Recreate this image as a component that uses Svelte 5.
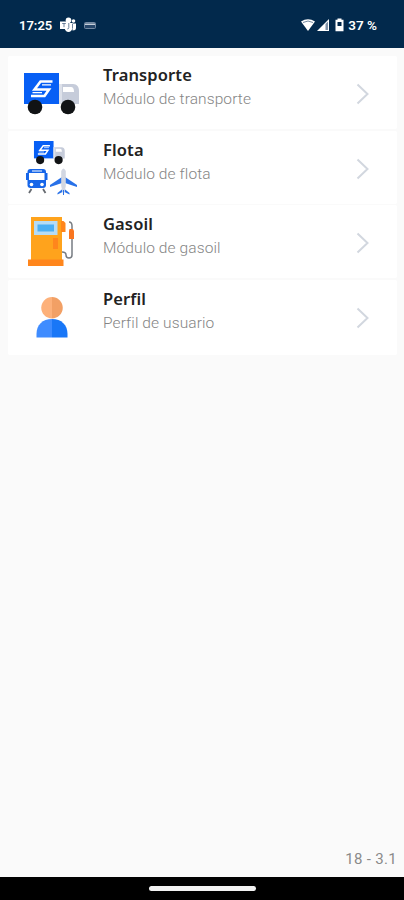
<script lang="ts">
  const modules = [
    { icon: 'truck', title: 'Transporte', text: 'Módulo de transporte' },
    { icon: 'fleet', title: 'Flota', text: 'Módulo de flota' },
    { icon: 'fuel', title: 'Gasoil', text: 'Módulo de gasoil' },
    { icon: 'user', title: 'Perfil', text: 'Perfil de usuario' }
  ];
</script>

{#snippet truck()}
  <path fill="#075ff5" d="M16 17h35v31H16z" />
  <path fill="#c6ccda" d="M51 28h14c4 0 6 3 6 7v13H51z" />
  <path fill="#dde1ea" d="M51 28h3v20h-3z" />
  <path fill="#fff" d="M55 31h8q3 0 3 5H55z" />
  <path fill="none" stroke="#fff" stroke-width="2.6" d="M44.500 25.500H32.500L26.500 33.500H41L36.500 40H23" />
  <path fill="none" stroke="#fff" stroke-width="1.2" d="M43 28.800H34M34 36.600H24.500" />
  <circle cx="27" cy="51" r="7.3" fill="#111315" />
  <circle cx="60" cy="51" r="7.3" fill="#111315" />
{/snippet}

<div class="screen">
  <header class="status">
    <span class="time">17:25</span>
    <svg width="17" height="16" viewBox="0 0 17 16">
      <circle cx="8.500" cy="3.300" r="2.800" fill="#fff" />
      <circle cx="13.500" cy="4" r="1.800" fill="#fff" />
      <path fill="#fff" d="M5 6h7.500v5q-1 4-4 4t-4-4zM12.500 6.500H16V11q0 2.500-3.500 2.500zM0 4.500h8v7.500H0z" />
      <path fill="none" stroke="#5b7390" stroke-width=".9" d="M2.200 6.500h3.600M4 6.500v3.700M8.800 6v4.500q0 1.500-1.500 1.500M12.500 7v4.500" />
    </svg>
    <svg class="card-icon" width="12" height="9" viewBox="0 0 12 9">
      <rect x=".5" y="1.500" width="11" height="6" rx="1" fill="#26466a" stroke="#7489a2" />
      <path fill="#c5ced9" d="M1 2.500h10V4H1z" />
    </svg>
    <span class="fill"></span>
    <svg width="43" height="14" viewBox="0 0 43 14">
      <path fill="#fff" d="M0 3.500Q7 -1 14 3.500L7 13z" />
      <path fill="none" stroke="#4d6784" stroke-width=".8" d="M2 4.500q5-3 10 0" />
      <path fill="#fff" d="M28 1v12H16z" />
      <path fill="#7e91a8" d="M24.500 6 27 3.500V12h-2.500z" />
      <path fill="#fff" d="M36.500 .5h4v1.200H42.500v11.600h-8V1.700h2z" />
      <path fill="#02294c" d="M36.500 4h4v4h-4z" />
    </svg>
    <span class="battery">37 %</span>
  </header>

  <main>
    {#each modules as item}
      <button class="item">
        <svg class="picture" width="88" height="72" viewBox="0 0 88 72" aria-hidden="true">
          {#if item.icon === 'truck'}
            {@render truck()}
          {:else if item.icon === 'fleet'}
            <g transform="translate(17 .5) scale(.56)">{@render truck()}</g>
            <!-- train -->
            <rect x="19.500" y="38" width="18.500" height="19" rx="3" fill="#1766e9" />
            <path fill="#1766e9" d="M18 42h2v7h-2zM38 42h1.500v7H38z" />
            <path fill="#fff" d="M21 42h15.500v7H21zM24 39.500h10v1H24z" />
            <circle cx="23.500" cy="53.500" r="1.800" fill="#fff" />
            <circle cx="34" cy="53.500" r="1.800" fill="#fff" />
            <path fill="none" stroke="#666a70" stroke-width="1.800" d="m23.500 58-2.500 4M35 58l2.500 4" />
            <!-- plane -->
            <path fill="#2871e8" d="M54 46v6l-12 4v-2zM57 46v6l12 4v-2zM54.500 58v3l-5 2.500V62zM56.500 58v3l5 2.500V62z" />
            <path fill="#d2d7e2" d="M53.200 40q2.300-5 4.600 0v15l-1.800 8h-1l-1.800-8z" />
            <path fill="#2871e8" d="M55 59h1v5h-1z" />
          {:else if item.icon === 'fuel'}
            <path fill="#ffa31c" d="M23 12h31v44H23z" />
            <path fill="#ff861c" d="M20 54.500h35.500V61H20zM53 16h2.500l2 2v9H53zM45 33h5v11h-5z" />
            <path fill="#b5dcf5" d="M26 16h23.500v14H26z" />
            <path fill="#4baff2" d="M29.500 19.500H46v7H29.500z" />
            <path fill="none" stroke="#777c82" stroke-width="1.500" d="M61 17q3 0 3 4v29q0 3-3 3t-3-3q0-3-4-3" />
            <path fill="#f97620" d="M61.500 24H65l1 2v8h-5v-8z" />
          {:else}
            <path fill="#3f8cff" d="M28.500 57.500V54c0-9 6-15 15.500-15v18.500z" />
            <path fill="#1977f7" d="M44 39c9.500 0 15.500 6 15.500 15v3.500H44z" />
            <path fill="#fdb17a" d="M44 17a10.500 10.500 0 0 0 0 21.500z" />
            <path fill="#f2a065" d="M44 17a10.500 10.500 0 0 1 0 21.500z" />
          {/if}
        </svg>
        <span class="copy">
          <strong>{item.title}</strong>
          <small>{item.text}</small>
        </span>
        <svg class="chevron" width="14" height="22" viewBox="0 0 14 22">
          <path fill="none" stroke="#d2d7df" stroke-width="2" d="m1.500 1.500 10 9.500-10 9.500" />
        </svg>
      </button>
    {/each}
  </main>

  <p class="version">18 - 3.1</p>
  <nav><span class="handle"></span></nav>
</div>

<style>
  :global(body) {
    margin: 0;
  }
  .screen {
    display: flex;
    flex-direction: column;
    width: 404px;
    height: 900px;
    overflow: hidden;
    background: #fafafa;
    font-family: Roboto, sans-serif;
  }
  .status {
    display: flex;
    align-items: center;
    box-sizing: border-box;
    height: 48px;
    padding: 2px 27px 0 19px;
    background: #02294c;
    color: #fff;
    font: 600 13px Roboto, sans-serif;
  }
  .time {
    width: 41px;
  }
  .card-icon {
    margin-left: 7px;
  }
  .fill {
    flex: 1;
  }
  .battery {
    margin-left: 4px;
    font-size: 13.500px;
    white-space: nowrap;
  }
  main {
    display: flex;
    flex-direction: column;
    gap: 1.600px;
    padding: 8px 7px 0 8px;
  }
  .item {
    display: flex;
    align-items: flex-start;
    height: 73px;
    padding: 0;
    border: 0;
    border-radius: 2px;
    background: #fff;
    text-align: left;
  }
  .item:last-child {
    height: 75px;
  }
  .copy {
    display: flex;
    flex: 1;
    flex-direction: column;
    padding: 7px 0 0 7px;
  }
  strong {
    color: #222;
    font: 600 16.500px/24px 'Noto Sans', sans-serif;
    letter-spacing: .12px;
  }
  small {
    color: #858585;
    font: 300 15.500px/24px Roboto, sans-serif;
    letter-spacing: .1px;
  }
  .chevron {
    margin: 27px 27px 0 0;
  }
  .version {
    margin: auto 7px 9px 0;
    color: #8a8a8a;
    font-size: 15px;
    line-height: 18px;
    letter-spacing: .3px;
    text-align: right;
  }
  nav {
    display: flex;
    justify-content: center;
    align-items: center;
    height: 23px;
    background: #000;
  }
  .handle {
    width: 107px;
    height: 5px;
    border-radius: 3px;
    background: #f2f2f2;
  }
</style>
